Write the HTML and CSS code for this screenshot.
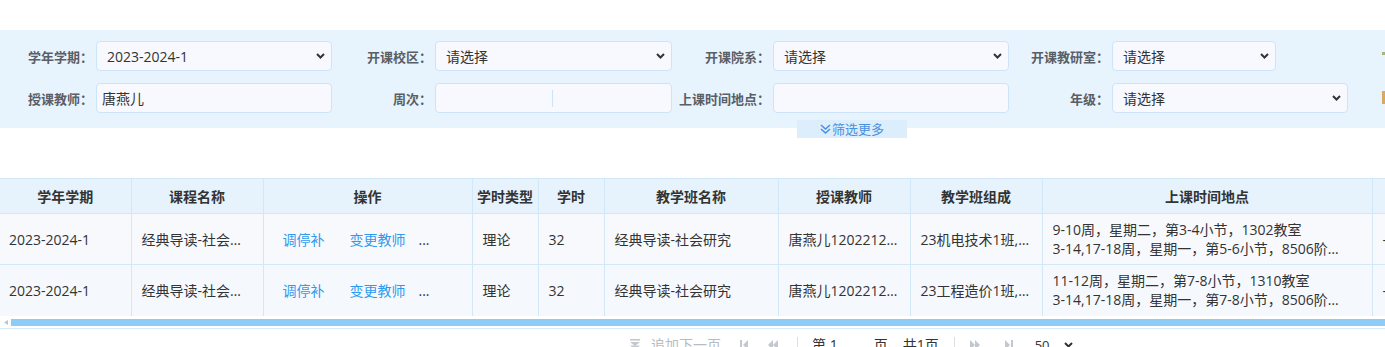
FILE: index.html
```html
<!DOCTYPE html>
<html lang="zh-CN">
<head>
<meta charset="utf-8">
<title>排课查询</title>
<link rel="stylesheet" href="styles.css">
</head>
<body>
<div class="page">
  <div class="filter">
    <div class="grid">
      <label class="lbl">学年学期：</label>
      <div class="ctl select"><span class="val">2023-2024-1</span><svg class="chev" width="9" height="6" viewBox="0 0 9 6"><polyline points="1,1 4.5,4.5 8,1" fill="none" stroke="#333" stroke-width="2"/></svg></div>
      <label class="lbl">开课校区：</label>
      <div class="ctl select"><span class="val">请选择</span><svg class="chev" width="9" height="6" viewBox="0 0 9 6"><polyline points="1,1 4.5,4.5 8,1" fill="none" stroke="#333" stroke-width="2"/></svg></div>
      <label class="lbl">开课院系：</label>
      <div class="ctl select"><span class="val">请选择</span><svg class="chev" width="9" height="6" viewBox="0 0 9 6"><polyline points="1,1 4.5,4.5 8,1" fill="none" stroke="#333" stroke-width="2"/></svg></div>
      <label class="lbl">开课教研室：</label>
      <div class="ctl select short"><span class="val">请选择</span><svg class="chev" width="9" height="6" viewBox="0 0 9 6"><polyline points="1,1 4.5,4.5 8,1" fill="none" stroke="#333" stroke-width="2"/></svg></div>
      <div></div>
      <div class="edge"><span class="edge-a"></span></div>

      <label class="lbl">授课教师：</label>
      <div class="ctl input"><span class="val">唐燕儿</span></div>
      <label class="lbl">周次：</label>
      <div class="ctl split"><span class="half"></span><span class="half2"></span></div>
      <label class="lbl">上课时间地点：</label>
      <div class="ctl input"></div>
      <label class="lbl">年级：</label>
      <div class="ctl select"><span class="val">请选择</span><svg class="chev" width="9" height="6" viewBox="0 0 9 6"><polyline points="1,1 4.5,4.5 8,1" fill="none" stroke="#333" stroke-width="2"/></svg></div>
      <div></div>
      <div class="edge"><span class="edge-b"></span></div>
    </div>
  </div>
  <div class="more"><svg width="11" height="10" viewBox="0 0 11 10"><polyline points="1,1 5.5,5 10,1" fill="none" stroke="#4a8fe0" stroke-width="1.5"/><polyline points="1,5 5.5,9 10,5" fill="none" stroke="#4a8fe0" stroke-width="1.5"/></svg><span>筛选更多</span></div>

  <div class="table-wrap">
    <table class="tbl">
      <colgroup>
        <col class="c1"><col class="c2"><col class="c3"><col class="c4"><col class="c5"><col class="c6"><col class="c7"><col class="c8"><col class="c9"><col class="c10">
      </colgroup>
      <thead>
        <tr>
          <th>学年学期</th><th>课程名称</th><th>操作</th><th>学时类型</th><th>学时</th><th>教学班名称</th><th>授课教师</th><th>教学班组成</th><th>上课时间地点</th><th></th>
        </tr>
      </thead>
      <tbody>
        <tr class="r1">
          <td>2023-2024-1</td>
          <td>经典导读-社会研究</td>
          <td class="ops"><a class="lnk">调停补</a><a class="lnk lnk2">变更教师</a><span class="dots">...</span></td>
          <td>理论</td>
          <td>32</td>
          <td>经典导读-社会研究</td>
          <td>唐燕儿120221234</td>
          <td>23机电技术1班,23机电技术2班</td>
          <td class="multi"><div class="ln">9-10周，星期二，第3-4小节，1302教室</div><div class="ln">3-14,17-18周，星期一，第5-6小节，8506阶梯教室</div></td>
          <td>-</td>
        </tr>
        <tr class="r2">
          <td>2023-2024-1</td>
          <td>经典导读-社会研究</td>
          <td class="ops"><a class="lnk">调停补</a><a class="lnk lnk2">变更教师</a><span class="dots">...</span></td>
          <td>理论</td>
          <td>32</td>
          <td>经典导读-社会研究</td>
          <td>唐燕儿120221234</td>
          <td>23工程造价1班,23工程造价2班</td>
          <td class="multi"><div class="ln">11-12周，星期二，第7-8小节，1310教室</div><div class="ln">3-14,17-18周，星期一，第7-8小节，8506阶梯教室</div></td>
          <td>-</td>
        </tr>
      </tbody>
    </table>
  </div>
  <div class="hscroll"><svg class="sarr" width="4" height="5" viewBox="0 0 4 5"><polygon points="4,0 0,2.5 4,5" fill="#b7c6d3"/></svg><div class="thumb"></div></div>
  <div class="hline"></div>

  <div class="pager">
    <svg class="pi p-append" width="10" height="11" viewBox="0 0 10 11"><rect x="0" y="0" width="10" height="1.6" fill="#c3c8ce"/><polygon points="0,3 10,3 5,7" fill="#c3c8ce"/><polygon points="0,6.5 10,6.5 5,10.5" fill="#c3c8ce"/></svg>
    <span class="ptxt dis">追加下一页</span>
    <svg class="pi p-first" width="8" height="10" viewBox="0 0 8 10"><rect x="0" y="0" width="2" height="10" fill="#c3c8ce"/><polygon points="8,0 3,5 8,10" fill="#c3c8ce"/></svg>
    <svg class="pi p-prev" width="10" height="10" viewBox="0 0 10 10"><polygon points="5,0 0,5 5,10" fill="#c3c8ce"/><polygon points="10,0 5,5 10,10" fill="#c3c8ce"/></svg>
    <span class="psep s1"></span>
    <span class="ptxt pg">第 1</span>
    <span class="ptxt pg p-ye">页</span>
    <span class="ptxt pg p-total">共1页</span>
    <span class="psep s2"></span>
    <svg class="pi p-next" width="10" height="10" viewBox="0 0 10 10"><polygon points="0,0 5,5 0,10" fill="#c3c8ce"/><polygon points="5,0 10,5 5,10" fill="#c3c8ce"/></svg>
    <svg class="pi p-last" width="8" height="10" viewBox="0 0 8 10"><polygon points="0,0 5,5 0,10" fill="#c3c8ce"/><rect x="6" y="0" width="2" height="10" fill="#c3c8ce"/></svg>
    <span class="ptxt pg p-size">50</span>
    <svg class="pi p-chev" width="9" height="6" viewBox="0 0 9 6"><polyline points="1,1 4.5,4.5 8,1" fill="none" stroke="#333" stroke-width="2"/></svg>
  </div>
</div>
</body>
</html>
```

FILE: styles.css
```css
* { box-sizing: border-box; }
html, body { margin: 0; padding: 0; background: #fff; overflow: hidden; }
body {
  width: 1385px;
  height: 347px;
  font-family: "Open Sans", "Noto Sans CJK SC", sans-serif;
  color: #333;
}
.page { padding-top: 30px; width: 1385px; overflow: hidden; }

/* filter panel */
.filter { background: #e8f4fd; padding: 11px 0 15px; }
.grid {
  display: grid;
  grid-template-columns: 96px 236px 103px 237px 101px 236px 103px 236px 34px 40px;
  grid-auto-rows: 30px;
  row-gap: 12px;
  align-items: center;
}
.lbl {
  font-size: 13px;
  font-weight: bold;
  color: #5a5e66;
  text-align: right;
  padding-right: 3px;
  white-space: nowrap;
}
.ctl {
  height: 30px;
  border: 1px solid #cde4f8;
  border-radius: 4px;
  background: #f7f9fe;
  display: flex;
  align-items: center;
  font-size: 14px;
  color: #333;
}
.select { padding: 0 6px 0 10px; }
.select .val { flex: 1; }
.select.short { width: 164px; }
.input { padding: 0 5px; }
.split { padding: 0; }
.split .half { width: 117px; height: 17px; border-right: 1px solid #cde4f8; }
.chev { display: block; }
.edge { height: 30px; }
.edge-a { display: block; width: 3px; height: 3px; margin-top: 11px; background: #a8b57a; }
.edge-b { display: block; width: 3px; height: 13px; margin-top: 8px; background: #d9a95e; }

.more {
  width: 110px;
  height: 18px;
  margin: -8px 0 0 797px;
  background: #dcedfc;
  color: #4a8fe0;
  font-size: 13px;
  display: flex;
  align-items: center;
  justify-content: center;
  gap: 1px;
  line-height: 18px;
}

/* table */
.table-wrap { margin-top: 40px; width: 1385px; overflow: hidden; }
.tbl {
  border-collapse: collapse;
  table-layout: fixed;
  width: 1492px;
  font-size: 14px;
}
.c1 { width: 131px; }
.c2 { width: 132px; }
.c3 { width: 209px; }
.c4 { width: 66px; }
.c5 { width: 66px; }
.c6 { width: 174px; }
.c7 { width: 132px; }
.c8 { width: 132px; }
.c9 { width: 330px; }
.c10 { width: 120px; }
.tbl th, .tbl td {
  border: 1px solid #d2e7f8;
  white-space: nowrap;
  overflow: hidden;
}
.tbl th:first-child, .tbl td:first-child { border-left: none; }
.tbl th {
  height: 35px;
  background: #e6f3fd;
  font-weight: bold;
  color: #333;
  text-align: center;
  padding: 0;
  text-overflow: clip;
}
.tbl td {
  height: 51px;
  padding: 0 10px;
  text-overflow: ellipsis;
  color: #333;
  vertical-align: middle;
}
.tbl td:first-child { padding-left: 9px; }
.tbl tbody tr:last-child td { border-bottom: none; }
.r1 td { background: #f7f9fd; }
.r2 td { background: #f5f9fe; }
.tbl td.ops { padding-left: 19px; text-overflow: clip; }
.lnk { color: #2f99ee; text-decoration: none; }
.lnk2 { margin-left: 25px; }
.dots { margin-left: 13px; color: #333; }
.tbl td.multi { line-height: 19px; }
.ln { max-width: 298px; overflow: hidden; text-overflow: ellipsis; white-space: nowrap; }

/* horizontal scrollbar */
.hscroll { display: flex; align-items: center; height: 7px; margin-top: 3px; }
.sarr { margin-left: 4px; }
.thumb { flex: 1; height: 7px; margin-left: 3px; background: #8ecbf6; }
.hline { height: 1px; margin-top: 2px; background: #d6ebfa; }

/* pager */
.pager {
  display: flex;
  align-items: center;
  height: 20px;
  margin-top: 6px;
  padding-left: 630px;
  font-size: 14px;
  line-height: 20px;
  white-space: nowrap;
}
.pi { display: block; flex: none; }
.ptxt { flex: none; }
.dis { color: #b7bcc3; margin-left: 11px; }
.pg { color: #333; }
.p-first { margin-left: 19px; }
.p-prev { margin-left: 20px; }
.psep { display: block; width: 1px; height: 16px; background: #dcdfe4; flex: none; }
.s1 { margin-left: 19px; }
.s1 + .pg { margin-left: 14px; }
.p-ye { margin-left: 36px; }
.p-total { margin-left: 15px; }
.s2 { margin-left: 15px; }
.p-next { margin-left: 15px; }
.p-last { margin-left: 25px; }
.p-size { margin-left: 22px; font-size: 13px; }
.p-chev { margin-left: 14px; }
```
